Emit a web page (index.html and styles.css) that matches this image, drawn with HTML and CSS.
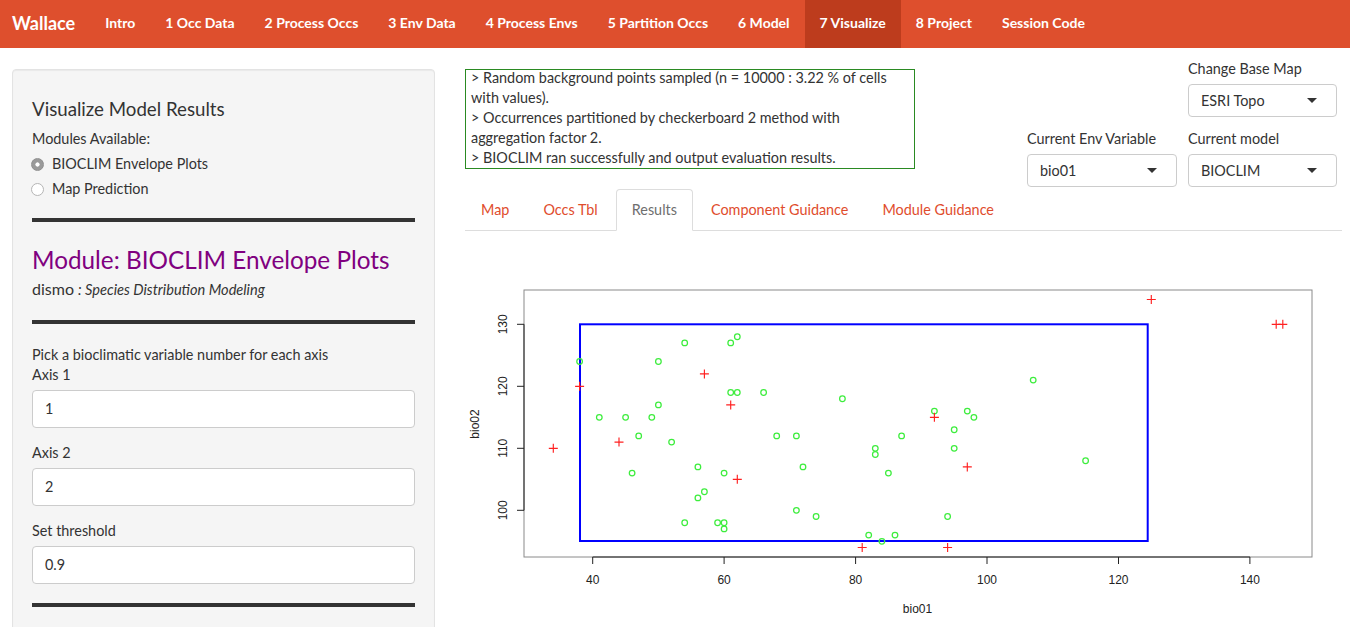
FILE: index.html
```html
<!DOCTYPE html>
<html>
<head>
<meta charset="utf-8">
<title>Wallace</title>
<link rel="stylesheet" href="styles.css">
</head>
<body>
<nav class="navbar">
  <span class="brand">Wallace</span>
  <ul class="nav">
    <li><a href="#">Intro</a></li>
    <li><a href="#">1 Occ Data</a></li>
    <li><a href="#">2 Process Occs</a></li>
    <li><a href="#">3 Env Data</a></li>
    <li><a href="#">4 Process Envs</a></li>
    <li><a href="#">5 Partition Occs</a></li>
    <li><a href="#">6 Model</a></li>
    <li class="active"><a href="#">7 Visualize</a></li>
    <li><a href="#">8 Project</a></li>
    <li><a href="#">Session Code</a></li>
  </ul>
</nav>
<div class="page">
  <aside class="well">
    <h4 class="well-title">Visualize Model Results</h4>
    <div class="group-label">Modules Available:</div>
    <div class="radio"><span class="radio-dot checked"></span>BIOCLIM Envelope Plots</div>
    <div class="radio radio-second"><span class="radio-dot"></span>Map Prediction</div>
    <div class="rule rule-1"></div>
    <div class="module-title">Module: BIOCLIM Envelope Plots</div>
    <div class="pkg">dismo <em>: Species Distribution Modeling</em></div>
    <div class="rule rule-2"></div>
    <div class="help">Pick a bioclimatic variable number for each axis</div>
    <div class="field-label">Axis 1</div>
    <div class="input">1</div>
    <div class="field-label spaced">Axis 2</div>
    <div class="input">2</div>
    <div class="field-label spaced">Set threshold</div>
    <div class="input">0.9</div>
    <div class="rule rule-3"></div>
  </aside>
  <main class="main">
    <div class="top-row">
      <div class="log">
        <div class="log-inner">
          &gt; Random background points sampled (n = 10000 : 3.22 % of cells with values).<br>
          &gt; Occurrences partitioned by checkerboard 2 method with aggregation factor 2.<br>
          &gt; BIOCLIM ran successfully and output evaluation results.
        </div>
      </div>
      <div class="controls">
        <div class="ctrl-empty"></div>
        <div class="ctrl">
          <div class="ctrl-label">Change Base Map</div>
          <div class="select"><span>ESRI Topo</span><span class="caret"></span></div>
        </div>
        <div class="ctrl">
          <div class="ctrl-label">Current Env Variable</div>
          <div class="select"><span>bio01</span><span class="caret"></span></div>
        </div>
        <div class="ctrl">
          <div class="ctrl-label">Current model</div>
          <div class="select"><span>BIOCLIM</span><span class="caret"></span></div>
        </div>
      </div>
    </div>
    <ul class="tabs">
      <li><a href="#">Map</a></li>
      <li><a href="#">Occs Tbl</a></li>
      <li class="active"><a href="#">Results</a></li>
      <li><a href="#">Component Guidance</a></li>
      <li><a href="#">Module Guidance</a></li>
    </ul>
    <div class="tab-content">
      <svg class="plot" width="877" height="396" viewBox="465 231 877 396">
        <rect x="524" y="290" width="788" height="267" fill="none" stroke="#8a8a8a" stroke-width="1"/>
        <g stroke="#222" stroke-width="1" fill="none">
          <line x1="592.7" y1="557" x2="1249.9" y2="557"/>
          <line x1="592.7" y1="557" x2="592.7" y2="564"/>
          <line x1="724.1" y1="557" x2="724.1" y2="564"/>
          <line x1="855.6" y1="557" x2="855.6" y2="564"/>
          <line x1="987.0" y1="557" x2="987.0" y2="564"/>
          <line x1="1118.5" y1="557" x2="1118.5" y2="564"/>
          <line x1="1249.9" y1="557" x2="1249.9" y2="564"/>
          <line x1="524" y1="324.3" x2="524" y2="510.3"/>
          <line x1="517" y1="510.3" x2="524" y2="510.3"/>
          <line x1="517" y1="448.3" x2="524" y2="448.3"/>
          <line x1="517" y1="386.3" x2="524" y2="386.3"/>
          <line x1="517" y1="324.3" x2="524" y2="324.3"/>
        </g>
        <g class="axis-text" text-anchor="middle">
          <text x="592.7" y="584">40</text>
          <text x="724.1" y="584">60</text>
          <text x="855.6" y="584">80</text>
          <text x="987.0" y="584">100</text>
          <text x="1118.5" y="584">120</text>
          <text x="1249.9" y="584">140</text>
          <text transform="translate(507 510.3) rotate(-90)">100</text>
          <text transform="translate(507 448.3) rotate(-90)">110</text>
          <text transform="translate(507 386.3) rotate(-90)">120</text>
          <text transform="translate(507 324.3) rotate(-90)">130</text>
          <text x="917.5" y="613">bio01</text>
          <text transform="translate(479 424) rotate(-90)">bio02</text>
        </g>
        <rect x="580" y="324.3" width="567.7" height="216.7" fill="none" stroke="#0000ff" stroke-width="2"/>
        <g fill="none" stroke="#3ded3d" stroke-width="1.25">
          <circle cx="579.6" cy="361.5" r="2.8"/>
          <circle cx="684.7" cy="342.9" r="2.8"/>
          <circle cx="730.7" cy="342.9" r="2.8"/>
          <circle cx="737.3" cy="336.7" r="2.8"/>
          <circle cx="658.4" cy="361.5" r="2.8"/>
          <circle cx="599.3" cy="417.3" r="2.8"/>
          <circle cx="625.6" cy="417.3" r="2.8"/>
          <circle cx="651.8" cy="417.3" r="2.8"/>
          <circle cx="658.4" cy="404.9" r="2.8"/>
          <circle cx="638.7" cy="435.9" r="2.8"/>
          <circle cx="671.6" cy="442.1" r="2.8"/>
          <circle cx="632.1" cy="473.1" r="2.8"/>
          <circle cx="697.9" cy="466.9" r="2.8"/>
          <circle cx="724.1" cy="473.1" r="2.8"/>
          <circle cx="697.9" cy="497.9" r="2.8"/>
          <circle cx="704.4" cy="491.7" r="2.8"/>
          <circle cx="684.7" cy="522.7" r="2.8"/>
          <circle cx="717.6" cy="522.7" r="2.8"/>
          <circle cx="724.1" cy="522.7" r="2.8"/>
          <circle cx="724.1" cy="528.9" r="2.8"/>
          <circle cx="730.7" cy="392.5" r="2.8"/>
          <circle cx="737.3" cy="392.5" r="2.8"/>
          <circle cx="763.6" cy="392.5" r="2.8"/>
          <circle cx="776.7" cy="435.9" r="2.8"/>
          <circle cx="796.4" cy="435.9" r="2.8"/>
          <circle cx="803.0" cy="466.9" r="2.8"/>
          <circle cx="796.4" cy="510.3" r="2.8"/>
          <circle cx="816.1" cy="516.5" r="2.8"/>
          <circle cx="842.4" cy="398.7" r="2.8"/>
          <circle cx="868.7" cy="535.1" r="2.8"/>
          <circle cx="881.9" cy="541.3" r="2.8"/>
          <circle cx="895.0" cy="535.1" r="2.8"/>
          <circle cx="875.3" cy="448.3" r="2.8"/>
          <circle cx="875.3" cy="454.5" r="2.8"/>
          <circle cx="901.6" cy="435.9" r="2.8"/>
          <circle cx="888.4" cy="473.1" r="2.8"/>
          <circle cx="934.4" cy="411.1" r="2.8"/>
          <circle cx="967.3" cy="411.1" r="2.8"/>
          <circle cx="973.9" cy="417.3" r="2.8"/>
          <circle cx="954.2" cy="429.7" r="2.8"/>
          <circle cx="954.2" cy="448.3" r="2.8"/>
          <circle cx="947.6" cy="516.5" r="2.8"/>
          <circle cx="1033.2" cy="380.1" r="2.8"/>
          <circle cx="1085.6" cy="460.7" r="2.8"/>
        </g>
        <g fill="none" stroke="#ff2020" stroke-width="1.15">
          <path d="M548.8 448.3h9M553.3 443.8v9"/>
          <path d="M575.1 386.3h9M579.6 381.8v9"/>
          <path d="M614.5 442.1h9M619.0 437.6v9"/>
          <path d="M699.9 373.9h9M704.4 369.4v9"/>
          <path d="M726.2 404.9h9M730.7 400.4v9"/>
          <path d="M732.8 479.3h9M737.3 474.8v9"/>
          <path d="M857.7 547.5h9M862.2 543.0v9"/>
          <path d="M929.9 417.3h9M934.4 412.8v9"/>
          <path d="M962.8 466.9h9M967.3 462.4v9"/>
          <path d="M943.1 547.5h9M947.6 543.0v9"/>
          <path d="M1146.8 299.5h9M1151.3 295.0v9"/>
          <path d="M1271.7 324.3h9M1276.2 319.8v9"/>
          <path d="M1278.3 324.3h9M1282.8 319.8v9"/>
        </g>
      </svg>
    </div>
  </main>
</div>
</body>
</html>
```
FILE: styles.css
```css
html, body {
  margin: 0;
  padding: 0;
}
body {
  font-family: Lato, "Open Sans", sans-serif;
  font-size: 14.4px;
  line-height: 20px;
  color: #333;
  background: #fff;
  height: 627px;
  overflow: hidden;
}

/* navbar */
.navbar {
  display: flex;
  height: 48px;
  background: #de4f2d;
}
.brand {
  color: #fff;
  font-size: 18px;
  font-weight: 700;
  line-height: 46px;
  padding: 0 15px 0 12px;
}
.nav {
  display: flex;
  list-style: none;
  margin: 0;
  padding: 0;
}
.nav a {
  display: block;
  height: 48px;
  padding: 0 15px;
  line-height: 46px;
  color: #fff;
  font-size: 14px;
  font-weight: 700;
  text-decoration: none;
}
.nav .active a {
  background: #bd3c1d;
}

/* page */
.page {
  display: flex;
  padding: 11px 0 0 12px;
}

.well {
  width: 423px;
  height: 620px;
  box-sizing: border-box;
  margin-top: 10px;
  padding: 19px;
  background: #f5f5f5;
  border: 1px solid #e3e3e3;
  border-radius: 4px;
  box-shadow: inset 0 1px 1px rgba(0, 0, 0, 0.05);
  flex-shrink: 0;
}
.well-title {
  margin: 10px 0 0;
  font-size: 18.7px;
  font-weight: 400;
  line-height: 20px;
}
.group-label {
  margin-top: 10px;
}
.radio {
  display: flex;
  align-items: center;
  margin-top: 5px;
}
.radio-dot {
  width: 13px;
  height: 13px;
  box-sizing: border-box;
  border-radius: 50%;
  border: 1px solid #b5b5b5;
  background: #fff;
  margin: 0 8px 0 -1px;
}
.radio-dot.checked {
  background: radial-gradient(circle, #fff 0 1.8px, #9a9a9a 2.4px);
  border-color: #8f8f8f;
}
.rule {
  height: 4px;
  background: #333;
}
.rule-1 {
  margin-top: 19px;
}
.module-title {
  margin-top: 23px;
  font-size: 24.3px;
  line-height: 30px;
  color: #800080;
}
.pkg {
  margin-top: 4px;
  font-size: 16px;
}
.pkg em {
  font-size: 14.6px;
}
.rule-2 {
  margin-top: 20px;
}
.help {
  margin-top: 21px;
}
.field-label.spaced {
  margin-top: 15px;
}
.input {
  margin-top: 5px;
  height: 38px;
  box-sizing: border-box;
  padding: 8px 12px;
  background: #fff;
  border: 1px solid #ccc;
  border-radius: 4px;
}
.rule-3 {
  margin-top: 19px;
}

/* main */
.main {
  width: 877px;
  margin-left: 30px;
  flex-shrink: 0;
}
.top-row {
  display: flex;
  justify-content: space-between;
  align-items: flex-start;
}
.log {
  width: 450px;
  height: 100px;
  box-sizing: border-box;
  margin-top: 10px;
  border: 1px solid #2a8a22;
  overflow: hidden;
}
.log-inner {
  margin-top: -2px;
  padding: 0 5px;
}
.controls {
  display: grid;
  grid-template-columns: 150px 149px;
  column-gap: 11px;
  row-gap: 12px;
  margin-right: 5px;
}
.ctrl-label {
  line-height: 20px;
}
.select {
  margin-top: 5px;
  height: 33px;
  box-sizing: border-box;
  display: flex;
  align-items: center;
  justify-content: space-between;
  padding: 0 19px 0 12px;
  background: #fff;
  border: 1px solid #ccc;
  border-radius: 4px;
}
.caret {
  width: 0;
  height: 0;
  border-left: 5px solid transparent;
  border-right: 5px solid transparent;
  border-top: 5px solid #333;
}

.tabs {
  display: flex;
  list-style: none;
  margin: 2px 0 0;
  padding: 0;
  border-bottom: 1px solid #ddd;
}
.tabs li {
  margin-bottom: -1px;
}
.tabs a {
  display: block;
  margin-right: 2px;
  padding: 10px 15px;
  line-height: 20px;
  border: 1px solid transparent;
  border-radius: 4px 4px 0 0;
  color: #df4d2d;
  text-decoration: none;
}
.tabs .active a {
  color: #6f6f6f;
  background: #fff;
  border-color: #ddd #ddd transparent;
}

.plot {
  display: block;
}
.axis-text text {
  font-family: "Liberation Sans", Arial, sans-serif;
  font-size: 12px;
  fill: #222;
}
```
